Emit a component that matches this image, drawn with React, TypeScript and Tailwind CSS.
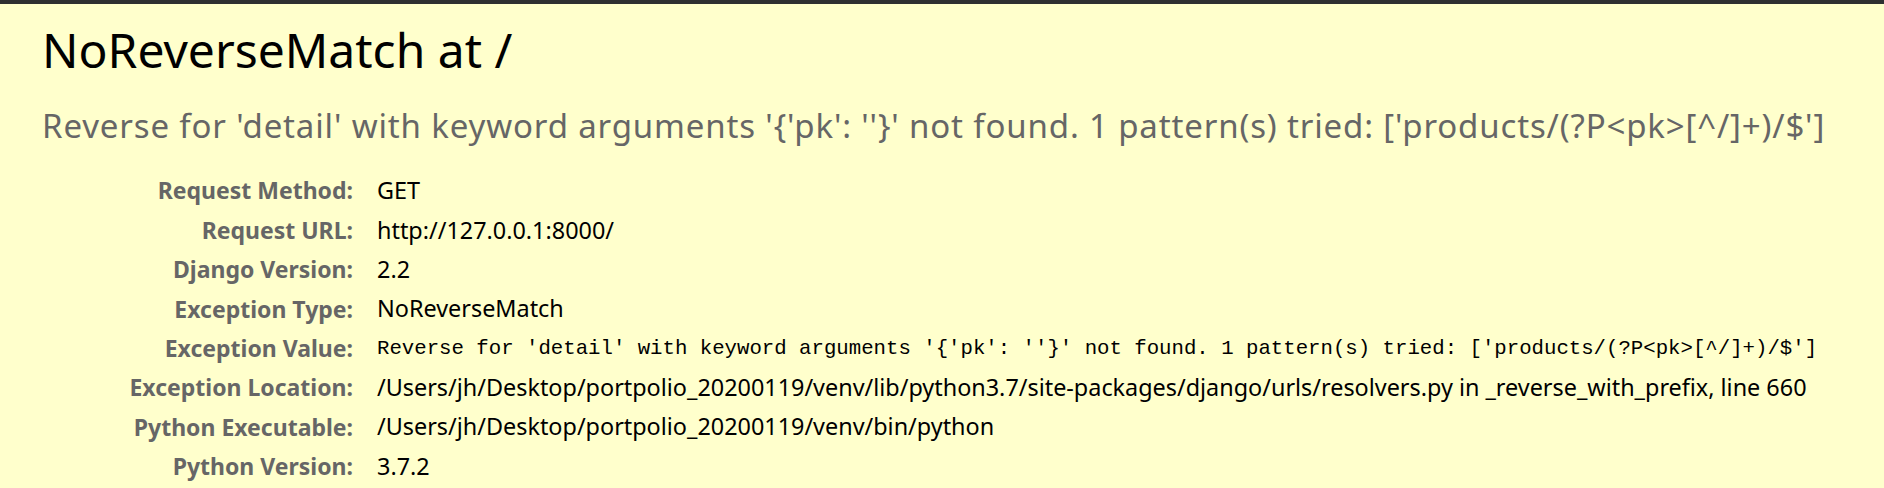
import React from 'react';

const rows: { label: string; value: string; mono?: boolean }[] = [
  { label: 'Request Method:', value: 'GET' },
  { label: 'Request URL:', value: 'http://127.0.0.1:8000/' },
  { label: 'Django Version:', value: '2.2' },
  { label: 'Exception Type:', value: 'NoReverseMatch' },
  {
    label: 'Exception Value:',
    value:
      "Reverse for 'detail' with keyword arguments '{'pk': ''}' not found. 1 pattern(s) tried: ['products/(?P<pk>[^/]+)/$']",
    mono: true,
  },
  {
    label: 'Exception Location:',
    value:
      '/Users/jh/Desktop/portpolio_20200119/venv/lib/python3.7/site-packages/django/urls/resolvers.py in _reverse_with_prefix, line 660',
  },
  { label: 'Python Executable:', value: '/Users/jh/Desktop/portpolio_20200119/venv/bin/python' },
  { label: 'Python Version:', value: '3.7.2' },
];

const App: React.FC = () => {
  return (
    <div className="w-[1884px] h-[488px] overflow-hidden flex flex-col font-['Noto_Sans',sans-serif]">
      <div className="h-[4px] bg-[#2e2f31]" />
      <div className="flex-1 bg-[#ffffcc] px-[42px]">
        <h1 className="pt-[18px] text-[48px] leading-[56px] font-normal text-black">
          NoReverseMatch at /
        </h1>
        <h2 className="mt-[28px] text-[33px] leading-[40px] tracking-[0.85px] font-normal text-[#666] whitespace-nowrap">
          Reverse for 'detail' with keyword arguments '{"{'pk': ''}"}' not found. 1 pattern(s)
          tried: ['products/(?P&lt;pk&gt;[^/]+)/$']
        </h2>
        <div className="mt-[25px] grid grid-cols-[311px_1fr] gap-x-[24px]">
          {rows.map(r => (
            <React.Fragment key={r.label}>
              <div className="h-[39.4px] flex items-center justify-end text-[23px] font-bold text-[#666] whitespace-nowrap">
                {r.label}
              </div>
              <div
                className={
                  r.mono
                    ? "h-[39.4px] flex items-center text-[20.7px] text-black whitespace-nowrap font-['Liberation_Mono',monospace]"
                    : 'h-[39.4px] flex items-center text-[23.4px] text-black whitespace-nowrap'
                }
              >
                {r.value}
              </div>
            </React.Fragment>
          ))}
        </div>
      </div>
    </div>
  );
};

export default App;
